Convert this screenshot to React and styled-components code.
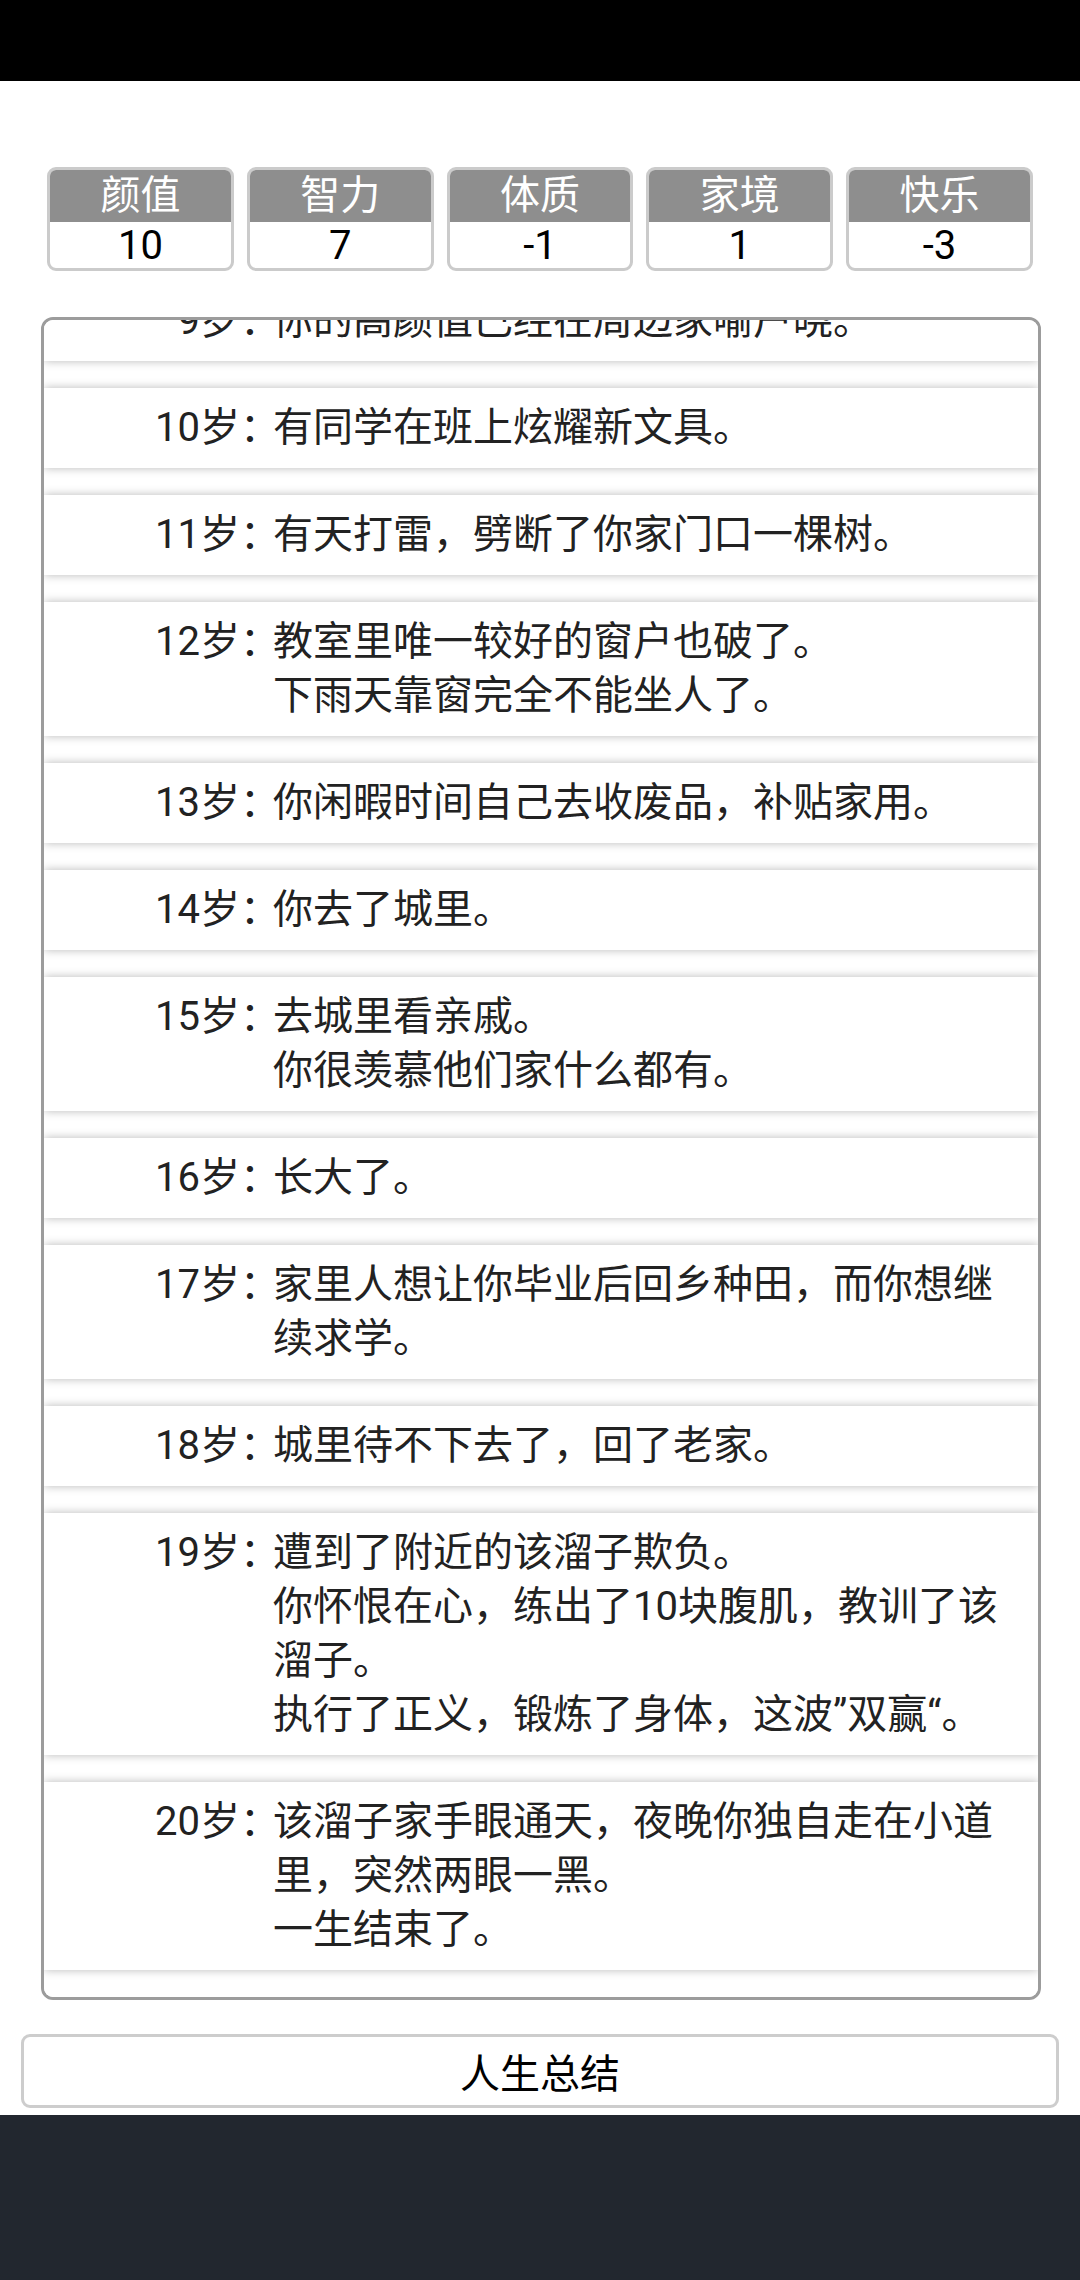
import {useLayoutEffect, useRef} from "react";
import styled, {createGlobalStyle} from "styled-components";

const GlobalStyle = createGlobalStyle`
  html, body {
    margin: 0;
    padding: 0;
    background: #fff;
  }
  body {
    font-family: Roboto, "Noto Sans CJK SC", sans-serif;
  }
`;

const stats = [
  {name: "颜值", value: 10},
  {name: "智力", value: 7},
  {name: "体质", value: -1},
  {name: "家境", value: 1},
  {name: "快乐", value: -3},
];

const events = [
  {age: 9, lines: ["你的高颜值已经在周边家喻户晓。"]},
  {age: 10, lines: ["有同学在班上炫耀新文具。"]},
  {age: 11, lines: ["有天打雷，劈断了你家门口一棵树。"]},
  {age: 12, lines: ["教室里唯一较好的窗户也破了。", "下雨天靠窗完全不能坐人了。"]},
  {age: 13, lines: ["你闲暇时间自己去收废品，补贴家用。"]},
  {age: 14, lines: ["你去了城里。"]},
  {age: 15, lines: ["去城里看亲戚。", "你很羡慕他们家什么都有。"]},
  {age: 16, lines: ["长大了。"]},
  {age: 17, lines: ["家里人想让你毕业后回乡种田，而你想继续求学。"]},
  {age: 18, lines: ["城里待不下去了，回了老家。"]},
  {
    age: 19,
    lines: [
      "遭到了附近的该溜子欺负。",
      "你怀恨在心，练出了10块腹肌，教训了该溜子。",
      "执行了正义，锻炼了身体，这波”双赢“。",
    ],
  },
  {
    age: 20,
    lines: ["该溜子家手眼通天，夜晚你独自走在小道里，突然两眼一黑。", "一生结束了。"],
  },
];

const App = () => {
  const listRef = useRef(null);

  // the trajectory list sits scrolled to its latest entry
  useLayoutEffect(() => {
    const el = listRef.current;
    if (el) el.scrollTop = el.scrollHeight;
  }, []);

  return (
    <Page>
      <GlobalStyle />
      <StatusBar />
      <Main>
        <StatsRow>
          {stats.map((s) => (
            <StatCard key={s.name}>
              <StatName>{s.name}</StatName>
              <StatValue>{s.value}</StatValue>
            </StatCard>
          ))}
        </StatsRow>
        <Trajectory ref={listRef}>
          {events.map((e) => (
            <EventRow key={e.age}>
              <Age>{e.age}岁</Age>
              <Colon>：</Colon>
              <EventText>
                {e.lines.map((line, i) => (
                  <div key={i}>{line}</div>
                ))}
              </EventText>
            </EventRow>
          ))}
        </Trajectory>
        <SummaryBtn>人生总结</SummaryBtn>
      </Main>
      <NavBar />
    </Page>
  );
};

export default App;

const Page = styled.div`
  display: flex;
  flex-direction: column;
  height: 2280px;
  overflow: hidden;
`;

const StatusBar = styled.div`
  height: 81px;
  background: #000;
  flex-shrink: 0;
`;

const Main = styled.div`
  display: flex;
  flex-direction: column;
  padding-top: 86px;
  padding-bottom: 7px;
`;

const StatsRow = styled.div`
  display: grid;
  grid-template-columns: repeat(5, 1fr);
  gap: 13px;
  margin: 0 47px;
`;

const StatCard = styled.div`
  display: flex;
  flex-direction: column;
  height: 104px;
  box-sizing: border-box;
  border: 3px solid #cbcbcb;
  border-radius: 9px;
  overflow: hidden;
  background: #fff;
`;

const StatName = styled.div`
  height: 52px;
  background: #8e8e8e;
  color: #fff;
  font-size: 40px;
  line-height: 52px;
  text-align: center;
`;

const StatValue = styled.div`
  flex: 1;
  display: flex;
  align-items: center;
  justify-content: center;
  color: #000;
  font-size: 40px;
`;

const Trajectory = styled.div`
  margin: 46px 39px 0 41px;
  height: 1683px;
  box-sizing: border-box;
  border: 3px solid #9c9c9c;
  border-radius: 12px;
  overflow-y: auto;
  scrollbar-width: none;
  background: #fff;

  &::-webkit-scrollbar {
    display: none;
  }
`;

const EventRow = styled.div`
  display: flex;
  align-items: flex-start;
  padding: 13px 24px 13px 0;
  margin-bottom: 27px;
  background: #fff;
  box-shadow: 0 0 9px rgba(0, 0, 0, 0.28);
  font-size: 40px;
  line-height: 54px;
  color: #222;
`;

const Age = styled.div`
  flex: 0 0 196px;
  text-align: right;
  white-space: nowrap;
`;

const Colon = styled.div`
  flex: 0 0 auto;
  letter-spacing: -7px;
  white-space: nowrap;
`;

const EventText = styled.div`
  flex: 1;
  min-width: 0;
`;

const SummaryBtn = styled.div`
  margin: 34px 21px 0;
  height: 74px;
  box-sizing: border-box;
  border: 3px solid #cdcdcd;
  border-radius: 9px;
  display: flex;
  align-items: center;
  justify-content: center;
  font-size: 40px;
  color: #000;
  background: #fff;
`;

const NavBar = styled.div`
  flex: 1;
  background: #22272f;
`;
